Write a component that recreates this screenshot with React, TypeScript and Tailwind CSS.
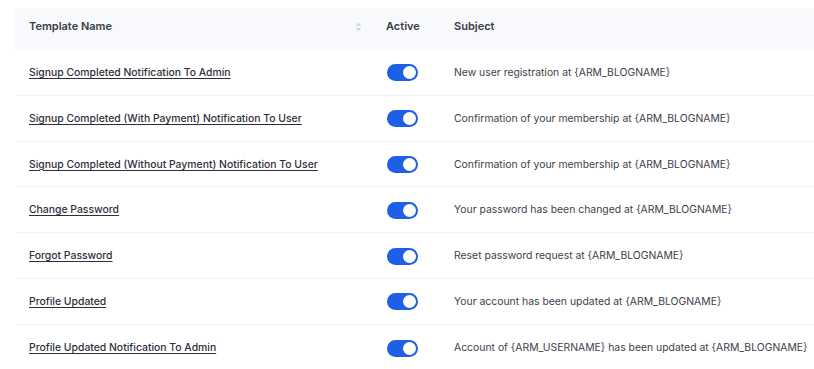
const rows = [
  { name: 'Signup Completed Notification To Admin', subject: 'New user registration at {ARM_BLOGNAME}' },
  { name: 'Signup Completed (With Payment) Notification To User', subject: 'Confirmation of your membership at {ARM_BLOGNAME}' },
  { name: 'Signup Completed (Without Payment) Notification To User', subject: 'Confirmation of your membership at {ARM_BLOGNAME}' },
  { name: 'Change Password', subject: 'Your password has been changed at {ARM_BLOGNAME}' },
  { name: 'Forgot Password', subject: 'Reset password request at {ARM_BLOGNAME}' },
  { name: 'Profile Updated', subject: 'Your account has been updated at {ARM_BLOGNAME}' },
  { name: 'Profile Updated Notification To Admin', subject: 'Account of {ARM_USERNAME} has been updated at {ARM_BLOGNAME}' },
]

function Toggle() {
  return (
    <span className="flex h-[17px] w-[31px] items-center justify-end rounded-full bg-[#1d5fe6] pr-[2px]">
      <span className="h-[13px] w-[13px] rounded-full bg-white" />
    </span>
  )
}

function SortIcon() {
  return (
    <svg width="7" height="10" viewBox="0 0 7 10" className="text-[#d3d6dd]">
      <path d="M3.5 0.5 L6.5 4 H0.5 Z" fill="currentColor" />
      <path d="M3.5 9.5 L6.5 6 H0.5 Z" fill="currentColor" />
    </svg>
  )
}

export default function App() {
  return (
    <div className="h-[369px] w-[814px] overflow-hidden bg-white pt-[8px] pl-[14px] font-['Inter',sans-serif]">
      <div className="flex h-[42px] items-center rounded-l-[6px] bg-[#f7f9fd] pb-[5px] text-[11px] font-semibold text-[#3a3b47]">
        <div className="flex w-[358px] shrink-0 items-center justify-between pl-[15px] pr-[10px]">
          <span>Template Name</span>
          <SortIcon />
        </div>
        <div className="w-[82px] shrink-0 pl-[14px]">Active</div>
        <div>Subject</div>
      </div>
      {rows.map((r, i) => (
        <div
          key={i}
          className={`ml-[2px] flex h-[45.8px] items-center pt-[1px] text-[10.4px] ${i < rows.length - 1 ? 'border-b border-[#eef0f4]' : ''}`}
        >
          <div className="w-[356px] shrink-0 pl-[13px]">
            <a className="cursor-pointer font-medium text-[#2e2f3a] underline underline-offset-2">{r.name}</a>
          </div>
          <div className="w-[82px] shrink-0 pl-[15px]">
            <Toggle />
          </div>
          <div className="whitespace-nowrap text-[#3f404c]">{r.subject}</div>
        </div>
      ))}
    </div>
  )
}
